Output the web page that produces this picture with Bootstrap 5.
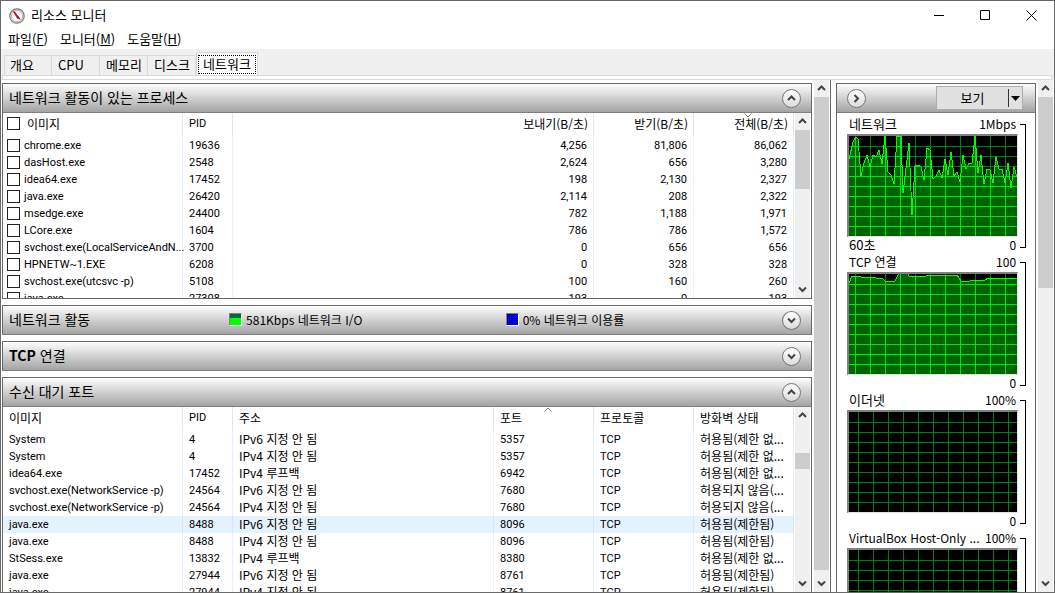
<!DOCTYPE html>
<html lang="ko">
<head>
<meta charset="utf-8">
<meta name="viewport" content="width=device-width, initial-scale=1">
<title>리소스 모니터</title>
<link href="https://cdn.jsdelivr.net/npm/bootstrap@5.3.0/dist/css/bootstrap.min.css" rel="stylesheet">
<script src="https://cdn.jsdelivr.net/npm/bootstrap@5.3.0/dist/js/bootstrap.bundle.min.js"></script>
<style>
  :root { --edge: #696969; --face: #f0f0f0; --thumb: #cdcdcd; }
  body { font-family: "Noto Sans CJK KR", "Noto Sans", sans-serif; font-size: 13px; line-height: 17px; color: #000; background: #fff; }
  button { font: inherit; color: inherit; }
  .window { height: 100vh; border: 1px solid var(--edge); }

  .titlebar { height: 29px; padding: 0 2px 0 8px; gap: 6px; }
  .titlebar .app-name { padding-bottom: 2px; }
  .caption-btn { width: 42px; height: 29px; background: none; }
  .menubar { height: 19px; padding: 0 0 2px 7px; gap: 12px; }
  .menubar a { color: #000; text-decoration: none; }

  .tabstrip { background: var(--face); padding: 3px 2px 0 3px; height: 31px; }
  .tab-row { height: 23px; }
  .tab-btn { height: 20px; width: 48px; background: var(--face); border: 1px solid #d9d9d9; border-left-width: 0; border-bottom: 0; line-height: 17px; padding: 0 0 2px 6px; text-align: left; white-space: nowrap; }
  .tab-btn:first-child { border-left-width: 1px; padding-left: 5px; }
  .tab-btn.active { width: 62px; height: 23px; background: #fff; border-left-width: 1px; padding: 1px; text-align: center; }
  .tab-btn.active span { display: block; height: 19px; line-height: 15px; border: 1px dotted #000; }
  .tab-line { height: 5px; background: #fff; border: 1px solid #d9d9d9; margin-left: -2px; }

  .left-pane { padding: 3px 2px 0 1px; gap: 6px; }
  .left-wrap { border-right: 1px solid var(--edge); padding-right: 1px; }
  .panel { border: 1px solid var(--edge); background: #fff; }
  .panel-open { border-bottom: 0; }
  .panel-head { height: 28px; padding: 0 10px 0 6px; background: linear-gradient(#fff, #f0f0f0 15%, #a4a4a4); box-shadow: 0 1px 0 #808080; }
  .panel-head.with-view { padding-right: 12px; }
  .panel h2 { font-size: 14px; line-height: 20px; font-weight: 400; margin: 0; padding-bottom: 2px; }
  .head-title { width: 222px; }
  .head-stat { width: 279px; font-size: 12px; padding-bottom: 2px; }
  .round-btn { width: 19px; height: 19px; border: 1px solid #777; border-radius: 50%; background: linear-gradient(#fff, #dcdcdc); padding: 0; }
  .body-fixed { height: 186px; padding-top: 1px; }
  .body-fill { padding-top: 1px; min-height: 0; }

  .grid-table { width: 100%; table-layout: fixed; border-collapse: separate; border-spacing: 0; font-size: 12px; }
  .grid-table th { height: 24px; font-weight: 400; padding: 0 6px 3px; border-right: 1px solid #e5e5e5; position: relative; white-space: nowrap; line-height: 17px; }
  .grid-table td { height: 17px; line-height: 15px; padding: 0 6px 2px; border-right: 1px solid #e8f1fb; white-space: nowrap; }
  .grid-table td.latin { line-height: 17px; padding-bottom: 0; }
  .grid-table tr.selected td { background: #e5f3ff; border-right-color: #cfe8fb; }
  .grid-table .latin { font-family: Roboto, "Noto Sans CJK KR", sans-serif; font-size: 11px; }
  .grid-table .numeric { text-align: right; }
  .grid-table th.numeric { padding-right: 5px; }
  .procs td:first-child, .procs th:first-child { padding-left: 4px; padding-right: 0; }
  .procs label { gap: 4px; }
  .procs th label { gap: 7px; }
  .pick { appearance: none; width: 13px; height: 13px; border: 1px solid #222; background: #fff; margin: 0; flex: none; }
  .sort-mark { position: absolute; top: 0; left: 50%; }

  .bar-track { width: 15px; background: var(--face); flex: none; }
  .bar-track button { height: 17px; width: 15px; background: none; padding: 0; }
  .bar-thumb { background: var(--thumb); }
  .inner-bar { margin: 0 1px; }
  .right-bar { margin-right: 1px; }

  .right-pane { width: 207px; padding: 3px 2px 0 5px; }
  .view-btn { width: 87px; height: 24px; background: #e1e1e1; border: 1px solid #adadad; padding: 0; }
  .view-btn span { line-height: 16px; }
  .view-btn .drop { width: 14px; height: 18px; border-left: 1px solid #333; }
  .charts { padding: 4px 9px 0 10px; }
  .chart-main { width: 171px; }
  .chart-label { height: 17px; padding: 0 2px; white-space: nowrap; line-height: 16px; }
  .chart-label .compact { font-size: 12px; }
  .plot { display: block; width: 171px; height: 103px; margin-top: 1px; border: 1px solid; border-width: 2px 1px 1px 2px; border-color: #808080 #e3e3e3 #e3e3e3 #808080; background: #000; }
  .range-mark { width: 6px; height: 124px; margin: 8px 0 0 2px; border: 1px solid #000; border-left: 0; }
  .legend-box { width: 13px; height: 13px; border: 1px solid; border-color: #808080 #fff #fff #808080; display: block; }
</style>
</head>
<body>
<div class="window d-flex flex-column overflow-hidden">
  <header class="titlebar d-flex align-items-center flex-shrink-0">
    <svg width="16" height="16" viewBox="0 0 16 16"><circle cx="8" cy="8" r="7.2" fill="#e8e8e8" stroke="#777" stroke-width="1.2"/><circle cx="8" cy="8" r="5.600" fill="#fff" stroke="#aaa" stroke-width=".8"/><path d="M3.500 3l2.500.4 4.500 6.800-1.800 1z" fill="#c8141c"/><path d="M8.200 7.500l3 4" stroke="#8a2020" stroke-width="1.200"/></svg>
    <span class="app-name me-auto">리소스 모니터</span>
    <div class="d-flex gap-1 flex-shrink-0">
    <button class="caption-btn border-0" aria-label="최소화"><svg width="11" height="11" class="d-block mx-auto"><path d="M0 5.500h10" stroke="#000"/></svg></button>
    <button class="caption-btn border-0" aria-label="최대화"><svg width="11" height="11" class="d-block mx-auto"><path d="M.5.5h9v9h-9z" fill="none" stroke="#000"/></svg></button>
    <button class="caption-btn border-0" aria-label="닫기"><svg width="11" height="11" class="d-block mx-auto"><path d="M.5.5l10 10M10.500.5l-10 10" stroke="#000"/></svg></button>
    </div>
  </header>
  <nav class="menubar d-flex align-items-center flex-shrink-0">
    <a href="#">파일(<u>F</u>)</a><a href="#">모니터(<u>M</u>)</a><a href="#">도움말(<u>H</u>)</a>
  </nav>
  <div class="tabstrip flex-shrink-0">
    <div class="tab-row d-flex align-items-end" role="tablist">
      <button class="tab-btn" role="tab">개요</button><button class="tab-btn" role="tab">CPU</button><button class="tab-btn" role="tab">메모리</button><button class="tab-btn" role="tab">디스크</button><button class="tab-btn active" role="tab" aria-selected="true"><span>네트워크</span></button>
    </div>
    <div class="tab-line"></div>
  </div>

  <main class="d-flex flex-grow-1 overflow-hidden">
    <div class="left-wrap d-flex flex-grow-1 overflow-hidden">
      <div class="left-pane d-flex flex-column flex-grow-1 overflow-hidden">
        <section class="panel flex-shrink-0">
          <div class="panel-head d-flex align-items-center"><h2 class="me-auto">네트워크 활동이 있는 프로세스</h2><button class="round-btn" data-dir="up" aria-label="접기"></button></div>
          <div class="body-fixed d-flex overflow-hidden">
            <div class="flex-grow-1 overflow-hidden">
              <table class="grid-table procs">
                <colgroup><col style="width:180px"><col style="width:50px"><col><col style="width:100px"><col style="width:100px"></colgroup>
                <thead><tr>
                  <th><label class="d-flex align-items-center"><input type="checkbox" class="pick">이미지</label></th><th class="latin">PID</th><th class="numeric">보내기(B/초)</th><th class="numeric">받기(B/초)</th>
                  <th class="numeric"><svg class="sort-mark" width="8" height="5"><path d="M.5.5l3.500 3.500 3.500-3.500" fill="none" stroke="#777"/></svg>전체(B/초)</th>
                </tr></thead>
                <tbody id="procRows"></tbody>
              </table>
            </div>
            <div class="bar-track inner-bar d-flex flex-column" data-gap="0" data-size="39"></div>
          </div>
        </section>
        <section class="panel flex-shrink-0">
          <div class="panel-head d-flex align-items-center"><h2 class="head-title">네트워크 활동</h2>
            <div class="head-stat d-flex align-items-center gap-1"><svg class="legend-box" viewBox="0 0 11 11"><path fill="#063" d="M0 0h11v4H0z"/><path fill="#0f0" d="M0 4h11v7H0z"/></svg>581Kbps 네트워크 I/O</div>
            <div class="head-stat d-flex align-items-center gap-1 me-auto"><svg class="legend-box" viewBox="0 0 11 11"><path fill="#00f" d="M0 0h11v11H0z"/><path d="M0 .5h11M0 2.500h11M0 4.500h11M0 6.500h11M0 8.500h11M0 10.500h11" stroke="#003" stroke-dasharray="1 1"/></svg>0% 네트워크 이용률</div>
            <button class="round-btn" data-dir="down" aria-label="펼치기"></button></div>
        </section>
        <section class="panel flex-shrink-0">
          <div class="panel-head d-flex align-items-center"><h2 class="me-auto"><b>TCP</b> 연결</h2><button class="round-btn" data-dir="down" aria-label="펼치기"></button></div>
        </section>
        <section class="panel panel-open d-flex flex-column flex-grow-1 overflow-hidden">
          <div class="panel-head d-flex align-items-center flex-shrink-0"><h2 class="me-auto">수신 대기 포트</h2><button class="round-btn" data-dir="up" aria-label="접기"></button></div>
          <div class="body-fill d-flex flex-grow-1 overflow-hidden">
            <div class="flex-grow-1 overflow-hidden">
              <table class="grid-table">
                <colgroup><col style="width:180px"><col style="width:50px"><col><col style="width:100px"><col style="width:100px"><col style="width:100px"></colgroup>
                <thead><tr><th>이미지</th><th class="latin">PID</th><th>주소</th>
                  <th><svg class="sort-mark" width="8" height="5"><path d="M.5 4.500l3.500-3.500 3.500 3.500" fill="none" stroke="#777"/></svg>포트</th><th>프로토콜</th><th>방화벽 상태</th></tr></thead>
                <tbody id="portRows"></tbody>
              </table>
            </div>
            <div class="bar-track inner-bar d-flex flex-column" data-gap="19" data-size="11"></div>
          </div>
        </section>
      </div>
      <div class="bar-track d-flex flex-column" data-gap="0" data-size="99"></div>
    </div>
    <aside class="right-pane d-flex flex-column flex-shrink-0 overflow-hidden">
      <section class="panel panel-open d-flex flex-column flex-grow-1 overflow-hidden">
        <div class="panel-head with-view d-flex align-items-center justify-content-between flex-shrink-0"><button class="round-btn ms-1" data-dir="right" aria-label="숨기기"></button>
          <button class="view-btn d-flex align-items-center"><span class="flex-grow-1">보기</span><span class="drop d-flex align-items-center justify-content-center"><svg width="9" height="5"><path d="M0 0h9L4.500 5z"/></svg></span></button></div>
        <div class="charts" id="charts"></div>
      </section>
    </aside>
    <div class="bar-track right-bar d-flex flex-column" data-gap="0" data-size="40"></div>
  </main>
</div>
<script>
  const procs = [
    ["chrome.exe", 19636, "4,256", "81,806", "86,062"], ["dasHost.exe", 2548, "2,624", "656", "3,280"],
    ["idea64.exe", 17452, "198", "2,130", "2,327"], ["java.exe", 26420, "2,114", "208", "2,322"],
    ["msedge.exe", 24400, "782", "1,188", "1,971"], ["LCore.exe", 1604, "786", "786", "1,572"],
    ["svchost.exe(LocalServiceAndN...", 3700, "0", "656", "656"], ["HPNETW~1.EXE", 6208, "0", "328", "328"],
    ["svchost.exe(utcsvc -p)", 5108, "100", "160", "260"], ["java.exe", 27308, "193", "0", "193"]];
  document.getElementById("procRows").innerHTML = procs.map(([name, pid, ...n]) =>
    `<tr><td class="latin"><label class="d-flex align-items-center"><input type="checkbox" class="pick">${name}</label></td><td class="latin">${pid}</td>` +
    n.map(v => `<td class="latin numeric">${v}</td>`).join("") + "</tr>").join("");

  const any = "지정 안 됨", loop = "루프백", open = "허용됨(제한 없...", limited = "허용됨(제한됨)", denied = "허용되지 않음(...";
  const ports = [
    ["System", 4, "IPv6 " + any, 5357, open], ["System", 4, "IPv4 " + any, 5357, open],
    ["idea64.exe", 17452, "IPv4 " + loop, 6942, open],
    ["svchost.exe(NetworkService -p)", 24564, "IPv6 " + any, 7680, denied], ["svchost.exe(NetworkService -p)", 24564, "IPv4 " + any, 7680, denied],
    ["java.exe", 8488, "IPv6 " + any, 8096, limited], ["java.exe", 8488, "IPv4 " + any, 8096, limited],
    ["StSess.exe", 13832, "IPv4 " + loop, 8380, open],
    ["java.exe", 27944, "IPv6 " + any, 8761, limited], ["java.exe", 27944, "IPv4 " + any, 8761, limited]];
  document.getElementById("portRows").innerHTML = ports.map(([name, pid, addr, port, fw], i) =>
    `<tr class="${i === 5 ? "selected" : ""}"><td class="latin">${name}</td><td class="latin">${pid}</td><td>${addr}</td><td class="latin">${port}</td><td class="latin">TCP</td><td>${fw}</td></tr>`).join("");

  const arrows = { up: "M1 5l3.500-3.500L8 5", down: "M1 1.500L4.500 5 8 1.500", right: "M2.500 0L6 3.500 2.500 7" };
  const arrow = dir => `<svg width="9" height="7" class="d-block mx-auto overflow-visible"><path d="${arrows[dir]}" fill="none" stroke="#444" stroke-width="2"/></svg>`;
  document.querySelectorAll(".round-btn").forEach(b => b.innerHTML = arrow(b.dataset.dir));
  document.querySelectorAll(".bar-track").forEach(t => t.innerHTML =
    `<button class="border-0" aria-label="위로">${arrow("up")}</button><div class="flex-grow-1"><div style="height:${t.dataset.gap}%"></div><div class="bar-thumb" style="height:${t.dataset.size}%"></div></div><button class="border-0" aria-label="아래로">${arrow("down")}</button>`);

  const net = "0,23 4,6 7,1 9,3 12,40 15,27 18,19 21,31 24,19 27,21 30,14 33,28 36,0 39,36 42,39 45,48 48,0 52,0 54,57 60,7 63,79 66,30 69,29 72,31 75,44 78,12 81,14 84,43 87,40 90,34 93,42 96,23 99,39 102,16 105,40 108,36 111,46 114,19 117,33 120,27 123,27 126,0 129,37 132,19 135,48 138,33 141,34 144,47 147,21 150,33 153,33 156,47 159,27 162,52 165,31 168,41";
  const tcp = "0,9 3,2 11,2 12,3 26,3 27,4 33,4 36,7 46,7 50,-1 59,0 60,2 77,2 78,1 108,1 112,7 121,7 122,6 134,6 135,7 139,4 168,4";
  const charts = [
    { name: "네트워크", max: "1Mbps", foot: "60초", shift: 6, line: net },
    { name: "TCP 연결", max: "100", foot: "", shift: 6, line: tcp, compact: true },
    { name: "이더넷", max: "100%", foot: "", shift: 9, line: "" },
    { name: "VirtualBox Host-Only ...", max: "100%", foot: "", shift: 9, line: "", compact: true }];
  const gridPath = shift => {
    let d = "";
    for (let x = shift; x < 168; x += 15) d += `M${x}.5 0v100`;
    for (let y = 10; y < 100; y += 10) d += `M0 ${y}.5h168`;
    return d;
  };
  document.getElementById("charts").innerHTML = charts.map((c, i) => `
    <div class="d-flex"><div class="chart-main">
      <div class="chart-label d-flex justify-content-between"><span class="${c.compact ? "compact" : ""}">${c.name}</span><span class="compact">${c.max}</span></div>
      <svg class="plot" shape-rendering="crispEdges"><path d="${gridPath(c.shift)}" stroke="#008010"/>` +
      (c.line ? `<clipPath id="area${i}"><polygon points="0,100 ${c.line} 168,100"/></clipPath>
        <g clip-path="url(#area${i})"><rect width="168" height="100" fill="#006400"/><path d="${gridPath(c.shift)}" stroke="#00e410"/></g>
        <polyline points="${c.line}" fill="none" stroke="#0f0"/>` : "") +
      `</svg>
      <div class="chart-label d-flex justify-content-between"><span>${c.foot}</span><span class="compact">0</span></div>
    </div><div class="range-mark"></div></div>`).join("");
</script>
</body>
</html>
